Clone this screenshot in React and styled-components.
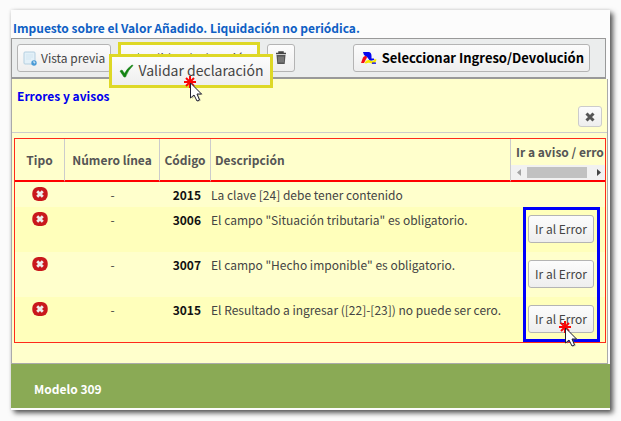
import styled, { createGlobalStyle, css } from "styled-components"

const GlobalStyle = createGlobalStyle`
  * {
    box-sizing: border-box;
  }
  body {
    margin: 0;
    background: #fbfbfb;
    color: #444;
    font-family: "Noto Sans CJK SC", "Open Sans", sans-serif;
    font-size: 12px;
    line-height: 18px;
  }
  button {
    font: inherit;
    color: inherit;
  }
`

const Page = styled.div`
  padding: 10px 11px;
`

const Card = styled.div`
  background: #fcfcfc;
  padding-bottom: 2px;
  box-shadow: 3px 3px 5px #555, 0 0 3px #ddd;
`

const Title = styled.h1`
  margin: 0;
  padding: 9px 2px 1px;
  font-size: 12px;
  line-height: 18px;
  font-weight: 700;
  color: #0f5fc4;
`

const Toolbar = styled.div`
  position: relative;
  display: flex;
  align-items: center;
  height: 41px;
  margin-right: 4px;
  padding: 0 15px 0 5px;
  gap: 7px;
  background: #ebeded;
  border: 1px solid #999;
  border-bottom: 2px solid #999;
`

const buttonLook = css`
  display: flex;
  align-items: center;
  justify-content: center;
  background: linear-gradient(#fcfcfc, #eee);
  border: 1px solid #b4b4b4;
  border-radius: 3px;
  white-space: nowrap;
`

const ToolButton = styled.button`
  ${buttonLook}
  height: 28px;
  padding: ${props => props.$icon ? "0 7px" : "0 5px"};
  gap: 4px;
  ${props => props.$push && css`
    margin-left: auto;
    padding: 0 5px 0 7px;
    gap: 5px;
    font-size: 13px;
    font-weight: 700;
    color: #000;
  `}
  ${props => props.$marked && css`
    width: 142px;
    height: 32px;
    border: 3px solid #ded826;
    border-radius: 0;
  `}
`

const Magnified = styled.button`
  ${buttonLook}
  position: absolute;
  left: 97px;
  top: 15px;
  width: 164px;
  height: 34px;
  padding: 0 0 2px;
  gap: 5px;
  font-size: 14px;
  border: 3px solid #ded826;
  border-radius: 0;
`

const Pointer = styled.span`
  position: absolute;
  left: ${props => props.$left}px;
  top: ${props => props.$top}px;
  display: flex;
  pointer-events: none;
`

const Panel = styled.section`
  margin-right: 2px;
  padding-bottom: 20px;
  background: #ffffcc;
  border: 1px solid #aaa;
  border-top: 0;
`

const PanelHead = styled.div`
  display: flex;
  justify-content: space-between;
  height: 54px;
  padding: 8px 5px 5px;
  border-bottom: 1px solid #ccc;
`

const PanelTitle = styled.h2`
  margin: 0;
  font-size: 12px;
  line-height: 18px;
  color: #0000ee;
`

const CloseButton = styled.button`
  ${buttonLook}
  align-self: flex-end;
  width: 24px;
  height: 21px;
  padding: 0;
  border-color: #ccc;
`

const TableWrap = styled.div`
  position: relative;
  margin: 5px 1px 0 2px;
  border: 1px solid #ff2a1a;
`

const Table = styled.table`
  width: 100%;
  table-layout: fixed;
  border-collapse: separate;
  border-spacing: 0;
`

const Th = styled.th`
  width: ${props => props.$width ? `${props.$width}px` : "auto"};
  height: 43px;
  padding: ${props => props.$flush ? 0 : "0 4px"};
  text-align: ${props => props.$align || "center"};
  color: #555;
  border-right: ${props => props.$flush ? 0 : "1px solid #ccc"};
  border-bottom: 2px solid #f00;
  overflow: hidden;
  white-space: nowrap;
`

const Clip = styled.div`
  height: 26px;
  padding: 4px 0 0 5px;
  text-align: left;
`

const ScrollBar = styled.div`
  display: flex;
  align-items: center;
  height: 15px;
  padding: 0 4px 0 6px;
  gap: 6px;
  background: #f1f1f1;
`

const Thumb = styled.div`
  flex: 1;
  height: 11px;
  margin-right: 4px;
  background: #c1c1c1;
`

const Row = styled.tr`
  height: ${props => props.$tall ? 45 : 25}px;
  background: ${props => props.$shade ? "#ffffbb" : "#ffffcc"};
`

const Td = styled.td`
  padding: ${props => props.$action ? "8px 11px 0 17px" : "4px 0 0"};
  text-align: ${props => props.$align || "center"};
  vertical-align: top;
  white-space: nowrap;
`

const Code = styled.strong`
  padding-right: 10px;
  color: #111;
`

const ErrorButton = styled.button`
  ${buttonLook}
  width: 100%;
  height: 28px;
  padding: 0;
`

const Highlight = styled.div`
  position: absolute;
  top: 68px;
  right: 5px;
  bottom: 0;
  width: 77px;
  border: 3px solid #0000fa;
  pointer-events: none;
`

const Footer = styled.footer`
  padding: 16px 23px 10px;
  background: #8aaa55;
  color: #fff;
  font-weight: 700;
`

const PreviewIcon = () => (
  <svg width="14" height="15" viewBox="0 0 14 15">
    <rect x="1" y="1" width="11" height="12" rx="1" fill="#e3f0f8" stroke="#b4cfe0" />
    <path d="M3 4h7M3 6h7M3 8h5" stroke="#d3e6f1" />
    <circle cx="11" cy="12" r="2.700" fill="#4b9bd6" />
    <path d="M10 11.300q1-1.200 2 0q0 .7-1 1" stroke="#fff" strokeWidth=".8" fill="none" />
  </svg>
)

const CheckIcon = ({ size }) => (
  <svg width={size} height={size} viewBox="0 0 15 15">
    <path d="M1 8L3 7L5.500 10.500Q8.500 5 13 2L14 2.500Q9 7 6.500 14H5Z" fill="#128312" stroke="#128312" strokeWidth=".6" />
  </svg>
)

const TrashIcon = () => (
  <svg width="12" height="14" viewBox="0 0 12 14">
    <path d="M1 2.500h10M4 2V1h4v1" stroke="#444" strokeWidth="1.500" fill="none" />
    <path d="M1.500 4h9l-.8 9h-7.400z" fill="#555" />
    <path d="M4 5.500v6M6 5.500v6M8 5.500v6" stroke="#aaa" strokeWidth=".8" />
  </svg>
)

const AgencyIcon = () => (
  <svg width="16" height="12" viewBox="0 0 16 12">
    <path d="M2 0H8Q10.500 .5 10.500 4V6.500H13V8L9 9L6.500 5.500L3 3Z" fill="#0707ef" />
    <path d="M0 11L2 5.500Q3 3.500 5 4L6 5.500L3 11Z" fill="#f30d18" />
    <path d="M3.500 11Q5 7.500 8 8Q10 8.500 11 9.300Q13 9 13.500 7L15.500 7.500Q14.500 12 11 11.700Q8 10 5 11.500Z" fill="#f8e800" />
    <path d="M11 10.500H15V11.800H11Z" fill="#0707ef" />
  </svg>
)

const CrossIcon = () => (
  <svg width="10" height="10" viewBox="0 0 10 10">
    <path d="M1.500 1.500L8.500 8.500M8.500 1.500L1.500 8.500" stroke="#555" strokeWidth="3" />
  </svg>
)

const ErrorIcon = () => (
  <svg width="16" height="16" viewBox="0 0 16 16" role="img" aria-label="Error">
    <rect x=".3" y="1" width="15.400" height="14" rx="6" fill="#c9181c" />
    <path d="M5.200 5.200L10.800 10.800M10.800 5.200L5.200 10.800" stroke="#eee" strokeWidth="2.800" />
  </svg>
)

const Arrow = ({ left }) => (
  <svg width="4" height="7" viewBox="0 0 4 7">
    <path d={left ? "M4 0V7L0 3.500Z" : "M0 0V7L4 3.500Z"} fill={left ? "#a3a3a3" : "#444"} />
  </svg>
)

const Cursor = () => (
  <svg width="24" height="28" viewBox="0 0 24 28">
    <path d="M8 8V23L11 20L14 26L17 24.500L14.500 19H19Z" fill="#777" opacity=".4" />
    <path d="M6 0V12M0 6H12M2 2L10 10M10 2L2 10" stroke="#fa0505" strokeWidth="2" />
    <path d="M6.500 7V22L10 19L13 25L15.500 24L13 18H17.500Z" fill="#fff" stroke="#223" />
  </svg>
)

const errors = [
  { code: "2015", text: "La clave [24] debe tener contenido" },
  { code: "3006", text: "El campo \"Situación tributaria\" es obligatorio.", action: true },
  { code: "3007", text: "El campo \"Hecho imponible\" es obligatorio.", action: true },
  { code: "3015", text: "El Resultado a ingresar ([22]-[23]) no puede ser cero.", action: true },
]

const App = () => {
  return (
    <Page>
      <GlobalStyle />
      <Card>
        <Title>Impuesto sobre el Valor Añadido. Liquidación no periódica.</Title>
        <Toolbar>
          <ToolButton><PreviewIcon />Vista previa</ToolButton>
          <ToolButton $marked><CheckIcon size={12} />Validar declaración</ToolButton>
          <ToolButton $icon aria-label="Eliminar"><TrashIcon /></ToolButton>
          <ToolButton $push><AgencyIcon />Seleccionar Ingreso/Devolución</ToolButton>
          <Magnified><CheckIcon size={15} />Validar declaración</Magnified>
          <Pointer $left={172} $top={37}><Cursor /></Pointer>
        </Toolbar>

        <Panel>
          <PanelHead>
            <PanelTitle>Errores y avisos</PanelTitle>
            <CloseButton aria-label="Cerrar"><CrossIcon /></CloseButton>
          </PanelHead>
          <TableWrap>
            <Table>
              <thead>
                <tr>
                  <Th $width={50}>Tipo</Th>
                  <Th $width={95}>Número línea</Th>
                  <Th $width={51}>Código</Th>
                  <Th $align="left">Descripción</Th>
                  <Th $width={94} $flush>
                    <Clip>Ir a aviso / erro</Clip>
                    <ScrollBar>
                      <Arrow left />
                      <Thumb />
                      <Arrow />
                    </ScrollBar>
                  </Th>
                </tr>
              </thead>
              <tbody>
                {errors.map((item, i) => (
                  <Row key={item.code} $tall={item.action} $shade={i % 2 === 1}>
                    <Td><ErrorIcon /></Td>
                    <Td>-</Td>
                    <Td $align="right"><Code>{item.code}</Code></Td>
                    <Td $align="left">{item.text}</Td>
                    {item.action ? <Td $action><ErrorButton>Ir al Error</ErrorButton></Td> : <Td />}
                  </Row>
                ))}
              </tbody>
            </Table>
            <Highlight />
            <Pointer $left={544} $top={182}><Cursor /></Pointer>
          </TableWrap>
        </Panel>
        <Footer>Modelo 309</Footer>
      </Card>
    </Page>
  )
}

export default App
